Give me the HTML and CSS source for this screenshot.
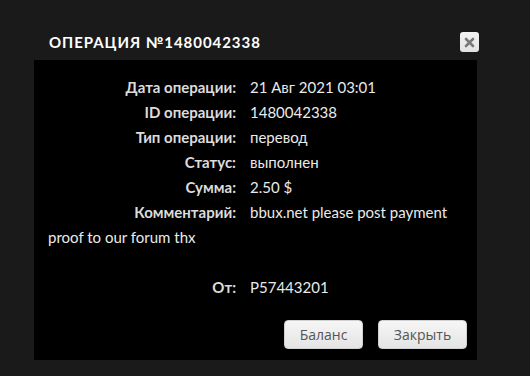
FILE: index.html
```html
<!DOCTYPE html>
<html lang="ru">
<head>
<meta charset="utf-8">
<link rel="stylesheet" href="styles.css">
</head>
<body>
<div class="dialog">
  <div class="titlebar">
    <span class="title">ОПЕРАЦИЯ №1480042338</span>
    <span class="close"><svg width="11" height="11" viewBox="0 0 11 11"><path d="M2 2 L9 9 M9 2 L2 9" stroke="#7a7a7a" stroke-width="2.6" stroke-linecap="round"/></svg></span>
  </div>
  <div class="content">
    <div class="info">
      <div class="row"><span class="label">Дата операции:</span><span class="value">21 Авг 2021 03:01</span></div>
      <div class="row"><span class="label">ID операции:</span><span class="value">1480042338</span></div>
      <div class="row"><span class="label">Тип операции:</span><span class="value">перевод</span></div>
      <div class="row"><span class="label">Статус:</span><span class="value">выполнен</span></div>
      <div class="row"><span class="label">Сумма:</span><span class="value">2.50 $</span></div>
      <div class="row"><span class="label">Комментарий:</span><span class="value">bbux.net please post payment</span> <span class="value">proof to our forum thx</span></div>
      <div class="row empty"></div>
      <div class="row"><span class="label">От:</span><span class="value">P57443201</span></div>
    </div>
    <div class="buttons">
      <button class="btn btn-balance">Баланс</button>
      <button class="btn btn-close">Закрыть</button>
    </div>
  </div>
</div>
</body>
</html>
```
FILE: styles.css
```css
html, body {
  margin: 0;
  padding: 0;
  background: #1a1a1a;
  height: 100%;
  overflow: hidden;
}
.dialog {
  margin-left: 34px;
  width: 443px;
  padding-top: 32px;
  font-family: "Lato", "Noto Sans", sans-serif;
}
.titlebar {
  height: 28px;
  display: flex;
  align-items: flex-start;
  justify-content: space-between;
  padding-left: 15px;
}
.title {
  color: #fff;
  font-weight: 700;
  font-size: 15px;
  letter-spacing: 0.95px;
  line-height: 20px;
}
.close {
  width: 19px;
  height: 20px;
  margin-right: -2px;
  background: linear-gradient(#f4f4f4, #e2e2e2);
  border-radius: 3px;
  display: flex;
  align-items: center;
  justify-content: center;
}
.content {
  background: #000;
  padding: 15px 10px 11px 14px;
}
.info {
  color: #e6e6e6;
  font-size: 15px;
  line-height: 25px;
}
.row {
  min-height: 25px;
}
.empty {
  height: 24px;
}
.label {
  display: inline-block;
  width: 188px;
  text-align: right;
  margin-right: 14px;
  color: #dcdcdc;
  font-weight: 700;
}
.value {
  color: #eaeaea;
}
.buttons {
  display: flex;
  justify-content: flex-end;
  gap: 15px;
  margin-top: 20px;
}
.btn {
  font-family: "Open Sans", "Noto Sans", sans-serif;
  font-size: 14px;
  color: #555;
  background: linear-gradient(#f6f6f6, #e4e4e4);
  border: 1px solid #d0d0d0;
  border-radius: 4px;
  height: 29px;
  padding: 0;
}
.btn-balance {
  width: 79px;
}
.btn-close {
  width: 89px;
}
```
